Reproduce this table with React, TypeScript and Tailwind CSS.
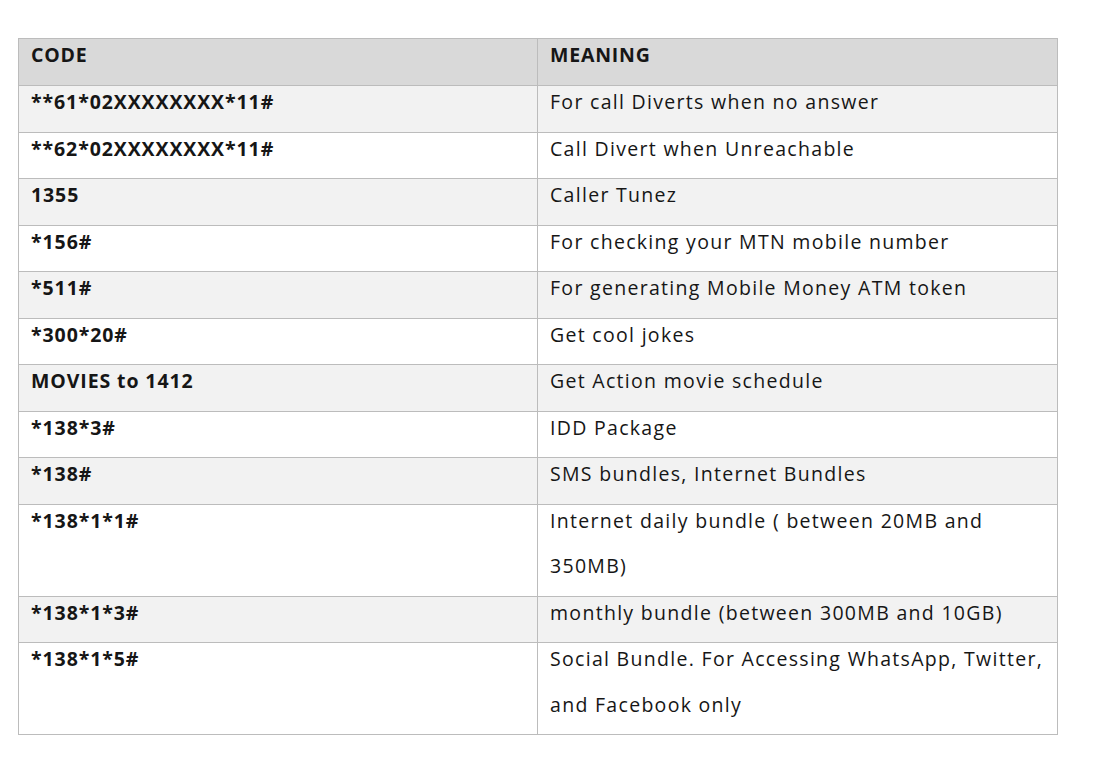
import React from 'react';

const rows: [string, string][] = [
  ["**61*02XXXXXXXX*11#", "For call Diverts when no answer"],
  ["**62*02XXXXXXXX*11#", "Call Divert when Unreachable"],
  ["1355", "Caller Tunez"],
  ["*156#", "For checking your MTN mobile number"],
  ["*511#", "For generating Mobile Money ATM token"],
  ["*300*20#", "Get cool jokes"],
  ["MOVIES to 1412", "Get Action movie schedule"],
  ["*138*3#", "IDD Package"],
  ["*138#", "SMS bundles, Internet Bundles"],
  ["*138*1*1#", "Internet daily bundle ( between 20MB and 350MB)"],
  ["*138*1*3#", "monthly bundle (between 300MB and 10GB)"],
  ["*138*1*5#", "Social Bundle. For Accessing WhatsApp, Twitter, and Facebook only"],
];

const App = () => {
  return (
    <div
      className="w-[1120px] h-[773px] bg-white pt-[38px] pl-[18px] text-[#161616]"
      style={{ fontFamily: '"Open Sans", Lato, sans-serif' }}
    >
      <table className="w-[1040px] border-collapse border border-[#bcbcbc] table-fixed text-[19.5px]">
        <colgroup>
          <col className="w-[519px]" />
          <col />
        </colgroup>
        <thead>
          <tr className="bg-[#d9d9d9]">
            <th className="border border-[#bcbcbc] px-[12px] text-left align-top font-bold tracking-[0.8px]">
              <div className="leading-[46px] -mt-[7px] pb-[7px]">CODE</div>
            </th>
            <th className="border border-[#bcbcbc] px-[12px] text-left align-top font-bold tracking-[0.8px]">
              <div className="leading-[46px] -mt-[7px] pb-[7px]">MEANING</div>
            </th>
          </tr>
        </thead>
        <tbody>
          {rows.map(([code, meaning], i) => (
            <tr key={code} className={i % 2 === 0 ? 'bg-[#f2f2f2]' : 'bg-white'}>
              <td className="border border-[#bcbcbc] px-[12px] align-top font-bold tracking-[0.9px]">
                <div className="leading-[45.5px] -mt-[7px] pb-[7px]">{code}</div>
              </td>
              <td className="border border-[#bcbcbc] pl-[12px] pr-[10px] align-top tracking-[1.3px]">
                <div className="leading-[45.5px] -mt-[7px] pb-[7px]">{meaning}</div>
              </td>
            </tr>
          ))}
        </tbody>
      </table>
    </div>
  );
};

export default App;
